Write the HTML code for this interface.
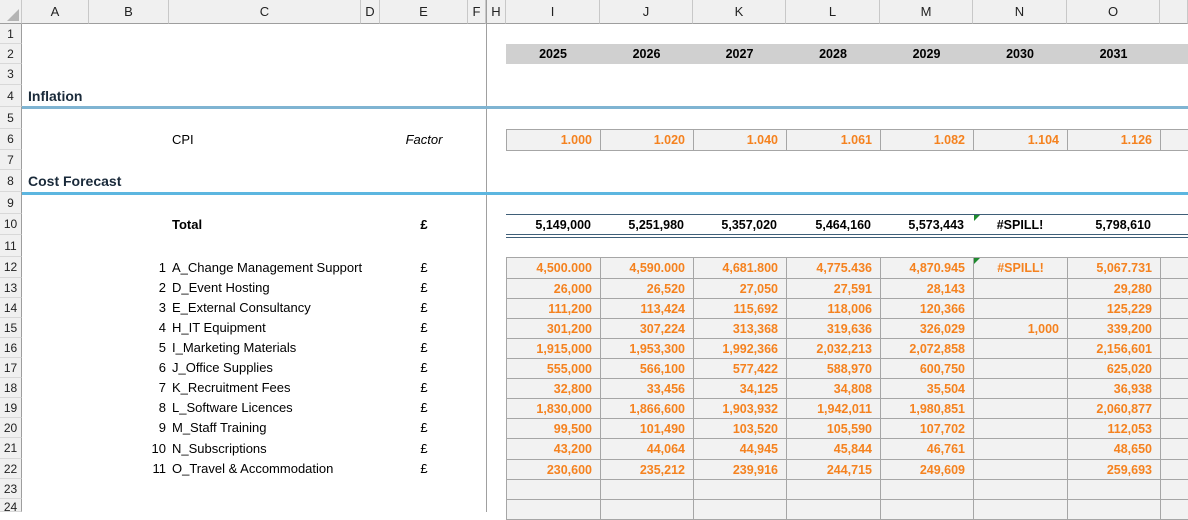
<!DOCTYPE html>
<html><head><meta charset="utf-8"><style>
*{margin:0;padding:0;box-sizing:border-box}
body{width:1188px;height:512px;overflow:hidden;background:#fff;font-family:"Liberation Sans",Arial,sans-serif;font-size:13px;color:#000;position:relative}
.a{position:absolute;white-space:nowrap}
.ch{position:absolute;top:0;height:24px;line-height:24px;background:#f0f0f0;border-right:1px solid #c8c8c8;border-bottom:1px solid #9e9e9e;text-align:center;font-size:13px;color:#222}
.rh{position:absolute;left:0;width:22px;background:#f0f0f0;border-right:1px solid #9e9e9e;border-bottom:1px solid #d8d8d8;text-align:center;font-size:12px;color:#222}
table{position:absolute;border-collapse:collapse;table-layout:fixed;width:683px}
td{border:1px solid #a6a6a6;background:#f2f2f2;color:#f5821f;font-weight:bold;text-align:right;padding:0 8px 0 2px;font-size:12.5px;white-space:nowrap;overflow:hidden}
td.c{text-align:center;padding:0}
.tri{position:absolute;width:0;height:0;border-top:6px solid #1e8a2e;border-right:6px solid transparent}
.t{position:absolute;top:215px;line-height:20px;font-weight:bold;font-size:12.5px;text-align:right;white-space:nowrap}
</style></head><body>
<div class="ch" style="left:0;width:22px;background:#f0f0f0"></div>
<div class="a" style="left:7px;top:9px;width:0;height:0;border-left:12px solid transparent;border-bottom:12px solid #b4b4b4"></div>
<div class="ch" style="left:22px;width:67px">A</div>
<div class="ch" style="left:89px;width:80px">B</div>
<div class="ch" style="left:169px;width:192px">C</div>
<div class="ch" style="left:361px;width:19px">D</div>
<div class="ch" style="left:380px;width:88px">E</div>
<div class="ch" style="left:468px;width:18px">F</div>
<div class="ch" style="left:486px;width:20px;border-left:1px solid #9e9e9e">H</div>
<div class="ch" style="left:506px;width:94px">I</div>
<div class="ch" style="left:600px;width:93px">J</div>
<div class="ch" style="left:693px;width:93px">K</div>
<div class="ch" style="left:786px;width:94px">L</div>
<div class="ch" style="left:880px;width:93px">M</div>
<div class="ch" style="left:973px;width:94px">N</div>
<div class="ch" style="left:1067px;width:93px">O</div>
<div class="ch" style="left:1160px;width:28px"></div>

<div class="rh" style="top:24px;height:20px;line-height:20px">1</div>
<div class="rh" style="top:44px;height:20px;line-height:20px">2</div>
<div class="rh" style="top:64px;height:21px;line-height:21px">3</div>
<div class="rh" style="top:85px;height:22px;line-height:22px">4</div>
<div class="rh" style="top:107px;height:22px;line-height:22px">5</div>
<div class="rh" style="top:129px;height:21px;line-height:21px">6</div>
<div class="rh" style="top:150px;height:20px;line-height:20px">7</div>
<div class="rh" style="top:170px;height:22px;line-height:22px">8</div>
<div class="rh" style="top:192px;height:22px;line-height:22px">9</div>
<div class="rh" style="top:214px;height:21px;line-height:21px">10</div>
<div class="rh" style="top:235px;height:22px;line-height:22px">11</div>
<div class="rh" style="top:257px;height:21px;line-height:21px">12</div>
<div class="rh" style="top:278px;height:20px;line-height:20px">13</div>
<div class="rh" style="top:298px;height:20px;line-height:20px">14</div>
<div class="rh" style="top:318px;height:20px;line-height:20px">15</div>
<div class="rh" style="top:338px;height:20px;line-height:20px">16</div>
<div class="rh" style="top:358px;height:20px;line-height:20px">17</div>
<div class="rh" style="top:378px;height:20px;line-height:20px">18</div>
<div class="rh" style="top:398px;height:20px;line-height:20px">19</div>
<div class="rh" style="top:418px;height:20px;line-height:20px">20</div>
<div class="rh" style="top:438px;height:21px;line-height:21px">21</div>
<div class="rh" style="top:459px;height:20px;line-height:20px">22</div>
<div class="rh" style="top:479px;height:20px;line-height:20px">23</div>
<div class="rh" style="top:499px;height:13px;line-height:16px">24</div>

<div class="a" style="left:486px;top:24px;width:1px;height:488px;background:#a0a0a0"></div>

<div class="a" style="left:506px;top:44px;width:682px;height:20px;background:#d0d0d0"></div>
<div class="a" style="top:44px;line-height:20px;font-weight:bold;font-size:12.5px;left:506px;width:94px;text-align:center">2025</div>
<div class="a" style="top:44px;line-height:20px;font-weight:bold;font-size:12.5px;left:600px;width:93px;text-align:center">2026</div>
<div class="a" style="top:44px;line-height:20px;font-weight:bold;font-size:12.5px;left:693px;width:93px;text-align:center">2027</div>
<div class="a" style="top:44px;line-height:20px;font-weight:bold;font-size:12.5px;left:786px;width:94px;text-align:center">2028</div>
<div class="a" style="top:44px;line-height:20px;font-weight:bold;font-size:12.5px;left:880px;width:93px;text-align:center">2029</div>
<div class="a" style="top:44px;line-height:20px;font-weight:bold;font-size:12.5px;left:973px;width:94px;text-align:center">2030</div>
<div class="a" style="top:44px;line-height:20px;font-weight:bold;font-size:12.5px;left:1067px;width:93px;text-align:center">2031</div>

<div class="a" style="left:28px;top:85px;line-height:22px;font-weight:bold;font-size:14px;color:#1a2a3a">Inflation</div>
<div class="a" style="left:22px;top:106px;width:1166px;height:3px;background:#7fb4d2"></div>
<div class="a" style="left:172px;top:129px;line-height:21px">CPI</div>
<div class="a" style="left:380px;width:88px;text-align:center;top:129px;line-height:21px;font-style:italic">Factor</div>

<table style="left:506px;top:129px">
<colgroup><col style="width:94px"><col style="width:93px"><col style="width:93px"><col style="width:94px"><col style="width:93px"><col style="width:94px"><col style="width:93px"><col style="width:29px"></colgroup>
<tr style="height:21px"><td>1.000</td><td>1.020</td><td>1.040</td><td>1.061</td><td>1.082</td><td>1.104</td><td>1.126</td><td></td></tr>
</table>

<div class="a" style="left:28px;top:170px;line-height:22px;font-weight:bold;font-size:14px;color:#1a2a3a">Cost Forecast</div>
<div class="a" style="left:22px;top:192px;width:1166px;height:3px;background:#5cb6e0"></div>

<div class="a" style="left:172px;top:214px;line-height:21px;font-weight:bold">Total</div>
<div class="a" style="left:380px;width:88px;text-align:center;top:214px;line-height:21px;font-weight:bold">£</div>
<div class="a" style="left:506px;top:214px;width:682px;height:1px;background:#3f5f78"></div>
<div class="a" style="left:506px;top:234px;width:682px;height:1px;background:#3f5f78"></div>
<div class="a" style="left:506px;top:237px;width:682px;height:1px;background:#3f5f78"></div>
<div class="t" style="left:506px;width:85px">5,149,000</div>
<div class="t" style="left:600px;width:84px">5,251,980</div>
<div class="t" style="left:693px;width:84px">5,357,020</div>
<div class="t" style="left:786px;width:85px">5,464,160</div>
<div class="t" style="left:880px;width:84px">5,573,443</div>
<div class="t" style="left:973px;width:94px;text-align:center">#SPILL!</div>
<div class="t" style="left:1067px;width:84px">5,798,610</div>
<div class="tri" style="left:974px;top:215px"></div>

<div class="a" style="left:89px;width:77px;text-align:right;top:257px;line-height:21px">1</div><div class="a" style="left:172px;top:257px;line-height:21px">A_Change Management Support</div><div class="a" style="left:380px;width:88px;text-align:center;top:257px;line-height:21px">£</div>
<div class="a" style="left:89px;width:77px;text-align:right;top:278px;line-height:20px">2</div><div class="a" style="left:172px;top:278px;line-height:20px">D_Event Hosting</div><div class="a" style="left:380px;width:88px;text-align:center;top:278px;line-height:20px">£</div>
<div class="a" style="left:89px;width:77px;text-align:right;top:298px;line-height:20px">3</div><div class="a" style="left:172px;top:298px;line-height:20px">E_External Consultancy</div><div class="a" style="left:380px;width:88px;text-align:center;top:298px;line-height:20px">£</div>
<div class="a" style="left:89px;width:77px;text-align:right;top:318px;line-height:20px">4</div><div class="a" style="left:172px;top:318px;line-height:20px">H_IT Equipment</div><div class="a" style="left:380px;width:88px;text-align:center;top:318px;line-height:20px">£</div>
<div class="a" style="left:89px;width:77px;text-align:right;top:338px;line-height:20px">5</div><div class="a" style="left:172px;top:338px;line-height:20px">I_Marketing Materials</div><div class="a" style="left:380px;width:88px;text-align:center;top:338px;line-height:20px">£</div>
<div class="a" style="left:89px;width:77px;text-align:right;top:358px;line-height:20px">6</div><div class="a" style="left:172px;top:358px;line-height:20px">J_Office Supplies</div><div class="a" style="left:380px;width:88px;text-align:center;top:358px;line-height:20px">£</div>
<div class="a" style="left:89px;width:77px;text-align:right;top:378px;line-height:20px">7</div><div class="a" style="left:172px;top:378px;line-height:20px">K_Recruitment Fees</div><div class="a" style="left:380px;width:88px;text-align:center;top:378px;line-height:20px">£</div>
<div class="a" style="left:89px;width:77px;text-align:right;top:398px;line-height:20px">8</div><div class="a" style="left:172px;top:398px;line-height:20px">L_Software Licences</div><div class="a" style="left:380px;width:88px;text-align:center;top:398px;line-height:20px">£</div>
<div class="a" style="left:89px;width:77px;text-align:right;top:418px;line-height:20px">9</div><div class="a" style="left:172px;top:418px;line-height:20px">M_Staff Training</div><div class="a" style="left:380px;width:88px;text-align:center;top:418px;line-height:20px">£</div>
<div class="a" style="left:89px;width:77px;text-align:right;top:438px;line-height:21px">10</div><div class="a" style="left:172px;top:438px;line-height:21px">N_Subscriptions</div><div class="a" style="left:380px;width:88px;text-align:center;top:438px;line-height:21px">£</div>
<div class="a" style="left:89px;width:77px;text-align:right;top:459px;line-height:20px">11</div><div class="a" style="left:172px;top:459px;line-height:20px">O_Travel &amp; Accommodation</div><div class="a" style="left:380px;width:88px;text-align:center;top:459px;line-height:20px">£</div>

<table style="left:506px;top:257px">
<colgroup><col style="width:94px"><col style="width:93px"><col style="width:93px"><col style="width:94px"><col style="width:93px"><col style="width:94px"><col style="width:93px"><col style="width:29px"></colgroup>
<tr style="height:21px"><td>4,500.000</td><td>4,590.000</td><td>4,681.800</td><td>4,775.436</td><td>4,870.945</td><td class="c">#SPILL!</td><td>5,067.731</td><td></td></tr>
<tr style="height:20px"><td>26,000</td><td>26,520</td><td>27,050</td><td>27,591</td><td>28,143</td><td></td><td>29,280</td><td></td></tr>
<tr style="height:20px"><td>111,200</td><td>113,424</td><td>115,692</td><td>118,006</td><td>120,366</td><td></td><td>125,229</td><td></td></tr>
<tr style="height:20px"><td>301,200</td><td>307,224</td><td>313,368</td><td>319,636</td><td>326,029</td><td>1,000</td><td>339,200</td><td></td></tr>
<tr style="height:20px"><td>1,915,000</td><td>1,953,300</td><td>1,992,366</td><td>2,032,213</td><td>2,072,858</td><td></td><td>2,156,601</td><td></td></tr>
<tr style="height:20px"><td>555,000</td><td>566,100</td><td>577,422</td><td>588,970</td><td>600,750</td><td></td><td>625,020</td><td></td></tr>
<tr style="height:20px"><td>32,800</td><td>33,456</td><td>34,125</td><td>34,808</td><td>35,504</td><td></td><td>36,938</td><td></td></tr>
<tr style="height:20px"><td>1,830,000</td><td>1,866,600</td><td>1,903,932</td><td>1,942,011</td><td>1,980,851</td><td></td><td>2,060,877</td><td></td></tr>
<tr style="height:20px"><td>99,500</td><td>101,490</td><td>103,520</td><td>105,590</td><td>107,702</td><td></td><td>112,053</td><td></td></tr>
<tr style="height:21px"><td>43,200</td><td>44,064</td><td>44,945</td><td>45,844</td><td>46,761</td><td></td><td>48,650</td><td></td></tr>
<tr style="height:20px"><td>230,600</td><td>235,212</td><td>239,916</td><td>244,715</td><td>249,609</td><td></td><td>259,693</td><td></td></tr>
<tr style="height:20px"><td></td><td></td><td></td><td></td><td></td><td></td><td></td><td></td></tr>
<tr style="height:20px"><td></td><td></td><td></td><td></td><td></td><td></td><td></td><td></td></tr>
</table>
<div class="tri" style="left:974px;top:258px"></div>
</body></html>
